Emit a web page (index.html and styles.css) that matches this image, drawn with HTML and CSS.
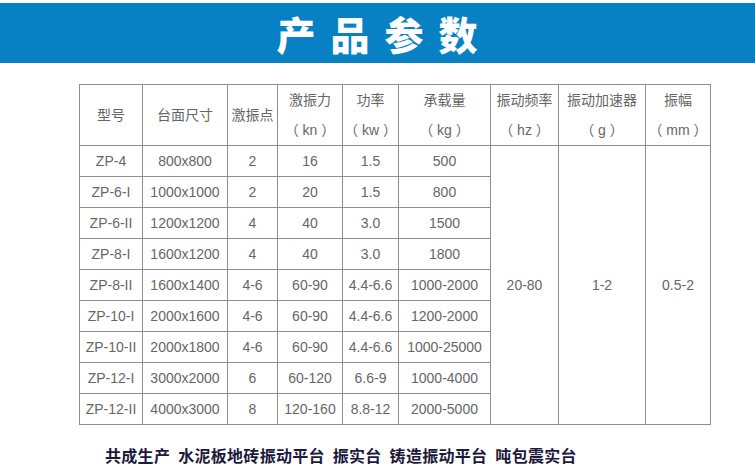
FILE: index.html
```html
<!DOCTYPE html>
<html lang="zh-CN">
<head>
<meta charset="utf-8">
<title>产品参数</title>
<link rel="stylesheet" href="styles.css">
</head>
<body>
<div class="banner"><h1 class="title">产品参数</h1></div>
<table class="spec">
  <colgroup>
    <col class="c1"><col class="c2"><col class="c3"><col class="c4"><col class="c5"><col class="c6"><col class="c7"><col class="c8"><col class="c9">
  </colgroup>
  <thead>
    <tr class="head">
      <th>型号</th>
      <th>台面尺寸</th>
      <th>激振点</th>
      <th>激振力<br><span class="unit">（ kn ）</span></th>
      <th>功率<br><span class="unit">（ kw ）</span></th>
      <th>承载量<br><span class="unit">（ kg ）</span></th>
      <th>振动频率<br><span class="unit">（ hz ）</span></th>
      <th>振动加速器<br><span class="unit">（ g ）</span></th>
      <th>振幅<br><span class="unit">（ mm ）</span></th>
    </tr>
  </thead>
  <tbody>
    <tr><td>ZP-4</td><td>800x800</td><td>2</td><td>16</td><td>1.5</td><td>500</td><td rowspan="9">20-80</td><td rowspan="9">1-2</td><td rowspan="9">0.5-2</td></tr>
    <tr><td>ZP-6-I</td><td>1000x1000</td><td>2</td><td>20</td><td>1.5</td><td>800</td></tr>
    <tr><td>ZP-6-II</td><td>1200x1200</td><td>4</td><td>40</td><td>3.0</td><td>1500</td></tr>
    <tr><td>ZP-8-I</td><td>1600x1200</td><td>4</td><td>40</td><td>3.0</td><td>1800</td></tr>
    <tr><td>ZP-8-II</td><td>1600x1400</td><td>4-6</td><td>60-90</td><td>4.4-6.6</td><td>1000-2000</td></tr>
    <tr><td>ZP-10-I</td><td>2000x1600</td><td>4-6</td><td>60-90</td><td>4.4-6.6</td><td>1200-2000</td></tr>
    <tr><td>ZP-10-II</td><td>2000x1800</td><td>4-6</td><td>60-90</td><td>4.4-6.6</td><td>1000-25000</td></tr>
    <tr><td>ZP-12-I</td><td>3000x2000</td><td>6</td><td>60-120</td><td>6.6-9</td><td>1000-4000</td></tr>
    <tr><td>ZP-12-II</td><td>4000x3000</td><td>8</td><td>120-160</td><td>8.8-12</td><td>2000-5000</td></tr>
  </tbody>
</table>
<p class="footer">共成生产 水泥板地砖振动平台 振实台 铸造振动平台 吨包震实台</p>
</body>
</html>
```

FILE: styles.css
```css
html, body {
  margin: 0;
  padding: 0;
  background: #ffffff;
}
body {
  font-family: "Liberation Sans", "Noto Sans CJK SC", sans-serif;
  padding-top: 3px;
}
.banner {
  height: 60px;
  background: #0781c3;
  display: flex;
  align-items: center;
  justify-content: center;
}
.title {
  margin: 0;
  padding-left: 14px;
  color: #ffffff;
  font-family: "Noto Sans CJK SC", sans-serif;
  font-weight: 900;
  font-size: 39px;
  line-height: 40px;
  letter-spacing: 15px;
}
.spec {
  margin: 21px 0 0 79px;
  border-collapse: collapse;
  table-layout: fixed;
  width: 631px;
  border: 1px solid #2a2a2a;
  color: #666666;
  font-size: 14px;
}
.c1 { width: 63px; }
.c2 { width: 85px; }
.c3 { width: 50px; }
.c4 { width: 65px; }
.c5 { width: 56px; }
.c6 { width: 92px; }
.c7 { width: 68px; }
.c8 { width: 87px; }
.c9 { width: 65px; }
.spec th, .spec td {
  border: 1px solid #8e8e8e;
  padding: 0;
  text-align: center;
  vertical-align: middle;
  white-space: nowrap;
  font-weight: normal;
}
.head th {
  height: 60px;
  line-height: 30px;
}
.unit {
  text-spacing-trim: space-all;
}
.spec tbody tr {
  height: 31px;
}
.spec tbody td {
  line-height: 30px;
}
.footer {
  margin: 21px 0 0 105px;
  font-family: "Noto Sans CJK SC", sans-serif;
  font-weight: 700;
  font-size: 16px;
  line-height: 18px;
  letter-spacing: 0.3px;
  word-spacing: 4px;
  color: #1c1a3c;
}
```
